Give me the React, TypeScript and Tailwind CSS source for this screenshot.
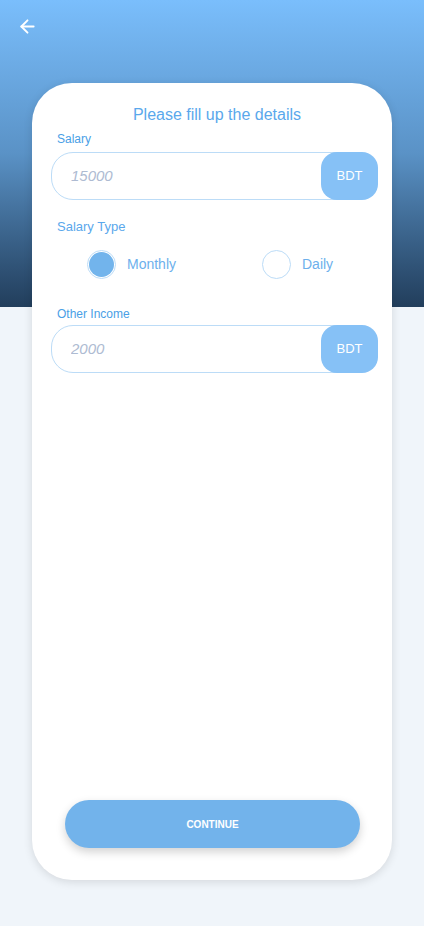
import { ArrowLeft } from "lucide-react";

const AmountField = ({ placeholder }: { placeholder: string }) => {
  return (
    <div className="flex flex-row items-stretch h-[48px] rounded-[22px] border border-[#bcdcf7] bg-white">
      <input
        className="flex-1 min-w-0 bg-transparent pl-[19px] text-[15px] italic text-[#4a6a8a] placeholder:text-[#aebbd2] outline-none"
        placeholder={placeholder}
      />
      <div className="-my-px -mr-px w-[57px] rounded-[16px] bg-[#86c1f6] flex items-center justify-center text-[13px] text-white">
        BDT
      </div>
    </div>
  );
};

const Radio = ({ label, checked }: { label: string; checked?: boolean }) => {
  return (
    <div className="flex flex-row items-center gap-x-[11px]">
      <div className="w-[29px] h-[29px] rounded-full border border-[#bcdcf7] flex items-center justify-center bg-white">
        {checked && <div className="w-[25px] h-[25px] rounded-full bg-[#72b4ec]" />}
      </div>
      <p className="text-[14px] text-[#6db0ec]">{label}</p>
    </div>
  );
};

const App = () => {
  return (
    <div
      className="min-h-[926px] w-full bg-[#f0f5fa]"
      style={{ fontFamily: '"Liberation Sans", Arial, sans-serif' }}
    >
      <header className="h-[307px] bg-gradient-to-b from-[#7abefc] via-[#5a92c6] to-[#223e5c] pl-[17px] pt-[16px]">
        <ArrowLeft className="text-white" size={21} strokeWidth={2.2} />
      </header>

      <main className="-mt-[224px] px-[32px] pb-[46px]">
        <section className="h-[797px] bg-white rounded-[40px] shadow-[0_2px_10px_rgba(0,0,0,0.12)] pl-[19px] pr-[14px] pt-[22px] pb-[32px] flex flex-col">
          <p className="text-center text-[16px] leading-[19px] text-[#5aa8ec] pl-[5px]">
            Please fill up the details
          </p>
          <p className="mt-[8px] pl-[6px] text-[12px] leading-[14px] text-[#4aa0e6]">Salary</p>
          <div className="mt-[6px]">
            <AmountField placeholder="15000" />
          </div>

          <p className="mt-[19px] pl-[6px] text-[13px] leading-[15px] text-[#5aa8ec]">Salary Type</p>
          <div className="mt-[16px] flex flex-row pl-[36px]">
            <div className="w-[175px]">
              <Radio label="Monthly" checked />
            </div>
            <Radio label="Daily" />
          </div>

          <p className="mt-[28px] pl-[6px] text-[12px] leading-[14px] text-[#4aa0e6]">Other Income</p>
          <div className="mt-[4px]">
            <AmountField placeholder="2000" />
          </div>

          <div className="flex-1" />

          <div className="pl-[14px] pr-[18px]">
            <button className="w-full h-[48px] rounded-full bg-[#72b3eb] text-white text-[10px] font-bold shadow-[0_4px_10px_rgba(0,0,0,0.18)]">
              CONTINUE
            </button>
          </div>
        </section>
      </main>
    </div>
  );
};

export default App;
